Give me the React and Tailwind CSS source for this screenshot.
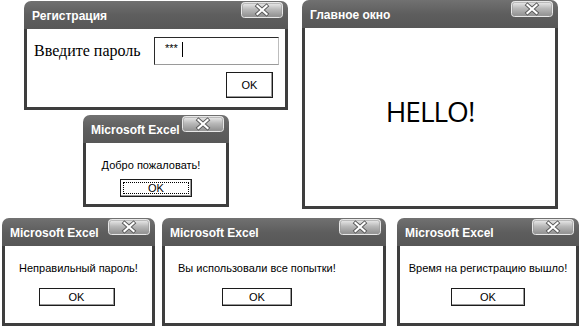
import React from "react";

const sans = { fontFamily: '"Liberation Sans", Arial, sans-serif' };

function CloseButton() {
  return (
    <svg width="42" height="16" viewBox="0 0 42 16" className="absolute right-[5px] top-[1px]">
      <defs>
        <linearGradient id="cb" x1="0" y1="0" x2="0" y2="1">
          <stop offset="0" stopColor="#f0f0f0" />
          <stop offset="0.45" stopColor="#b9b9b9" />
          <stop offset="1" stopColor="#8c8c8c" />
        </linearGradient>
      </defs>
      <rect x="0.5" y="0.5" width="41" height="15" rx="3" fill="url(#cb)" stroke="#e8e8e8" />
      <rect x="1.5" y="1.5" width="39" height="13" rx="2" fill="none" stroke="#9a9a9a" strokeWidth="0.6" />
      <path d="M16.5 4 L25.5 12 M25.5 4 L16.5 12" stroke="#5a5a5a" strokeWidth="4" strokeLinecap="square" />
      <path d="M16.5 4 L25.5 12 M25.5 4 L16.5 12" stroke="#ffffff" strokeWidth="2.2" strokeLinecap="square" />
    </svg>
  );
}

function Window({ title, className, bodyClass, children }) {
  return (
    <div className={`flex shrink-0 flex-col overflow-hidden rounded-t-[7px] ${className}`}>
      <div className="relative flex h-[28px] shrink-0 items-center bg-gradient-to-b from-[#717171] via-[#5e5e5e] to-[#575757] pl-[8px] pt-[2px]">
        <span className="text-[12px] font-bold text-white" style={sans}>
          {title}
        </span>
        <CloseButton />
      </div>
      <div className={`flex-1 border-x-[3px] border-b-[3px] border-[#3e3e3e] bg-white ${bodyClass}`}>{children}</div>
    </div>
  );
}

function OkButton({ className = "", focused }) {
  return (
    <div
      className={`flex items-center justify-center border border-[#1c1c1c] bg-white p-[2px] shadow-[inset_-1px_-1px_0_#9a9a9a] ${className}`}
      style={sans}
    >
      <div
        className={`flex h-full w-full items-center justify-center text-[11px] text-black ${
          focused ? "border border-dotted border-black" : ""
        }`}
      >
        OK
      </div>
    </div>
  );
}

function Text({ children, className = "" }) {
  return (
    <p className={`text-[11px] leading-[16px] text-black ${className}`} style={sans}>
      {children}
    </p>
  );
}

export default function App() {
  return (
    <div className="h-[329px] w-[583px] overflow-hidden bg-white">
      <div className="flex h-[218px]">
        <div className="ml-[24px] mt-[1px] flex flex-col">
          <Window title="Регистрация" className="h-[109px] w-[264px]" bodyClass="flex flex-col pt-[8px] pr-[6px]">
            <div className="flex items-center justify-between pl-[7px]">
              <span className="text-[16px] text-black" style={{ fontFamily: '"Liberation Serif", "Times New Roman", serif' }}>
                Введите пароль
              </span>
              <div className="flex h-[28px] w-[125px] items-start border border-t-[#2a2a2a] border-l-[#2a2a2a] border-r-[#bdbdbd] border-b-[#9a9a9a] pl-[10px] pt-[4px]">
                <span className="text-[11px] leading-[12px] text-black" style={sans}>
                  ***
                </span>
                <span className="ml-[4px] h-[15px] w-px bg-black" />
              </div>
            </div>
            <OkButton className="mr-[6px] mt-[7px] h-[26px] w-[47px] self-end" />
          </Window>

          <Window title="Microsoft Excel" className="ml-[59px] mt-[5px] h-[92px] w-[146px]" bodyClass="flex flex-col items-center pt-[14px]">
            <Text className="pr-[10px]">Добро пожаловать!</Text>
            <OkButton focused className="mt-[6px] h-[18px] w-[72px]" />
          </Window>
        </div>

        <Window title="Главное окно" className="ml-[14px] h-[209px] w-[256px]" bodyClass="flex items-center justify-center pb-[12px]">
          <span className="text-[28px] tracking-[-1px] text-black" style={{ fontFamily: '"Open Sans", "Noto Sans", sans-serif' }}>
            HELLO!
          </span>
        </Window>
      </div>

      <div className="flex pl-[2px]">
        <Window title="Microsoft Excel" className="h-[108px] w-[153px]" bodyClass="flex flex-col items-center pt-[14px]">
          <Text>Неправильный пароль!</Text>
          <OkButton className="mt-[12px] h-[18px] w-[76px] -translate-x-[2px]" />
        </Window>

        <Window title="Microsoft Excel" className="ml-[7px] h-[108px] w-[224px]" bodyClass="flex pl-[13px] pt-[14px]">
          <div className="flex flex-col items-center">
            <Text>Вы использовали все попытки!</Text>
            <OkButton className="mt-[12px] h-[18px] w-[70px]" />
          </div>
        </Window>

        <Window title="Microsoft Excel" className="ml-[11px] h-[108px] w-[182px]" bodyClass="flex flex-col items-center pt-[14px]">
          <Text>Время на регистрацию вышло!</Text>
          <OkButton className="mt-[12px] h-[18px] w-[74px]" />
        </Window>
      </div>
    </div>
  );
}
